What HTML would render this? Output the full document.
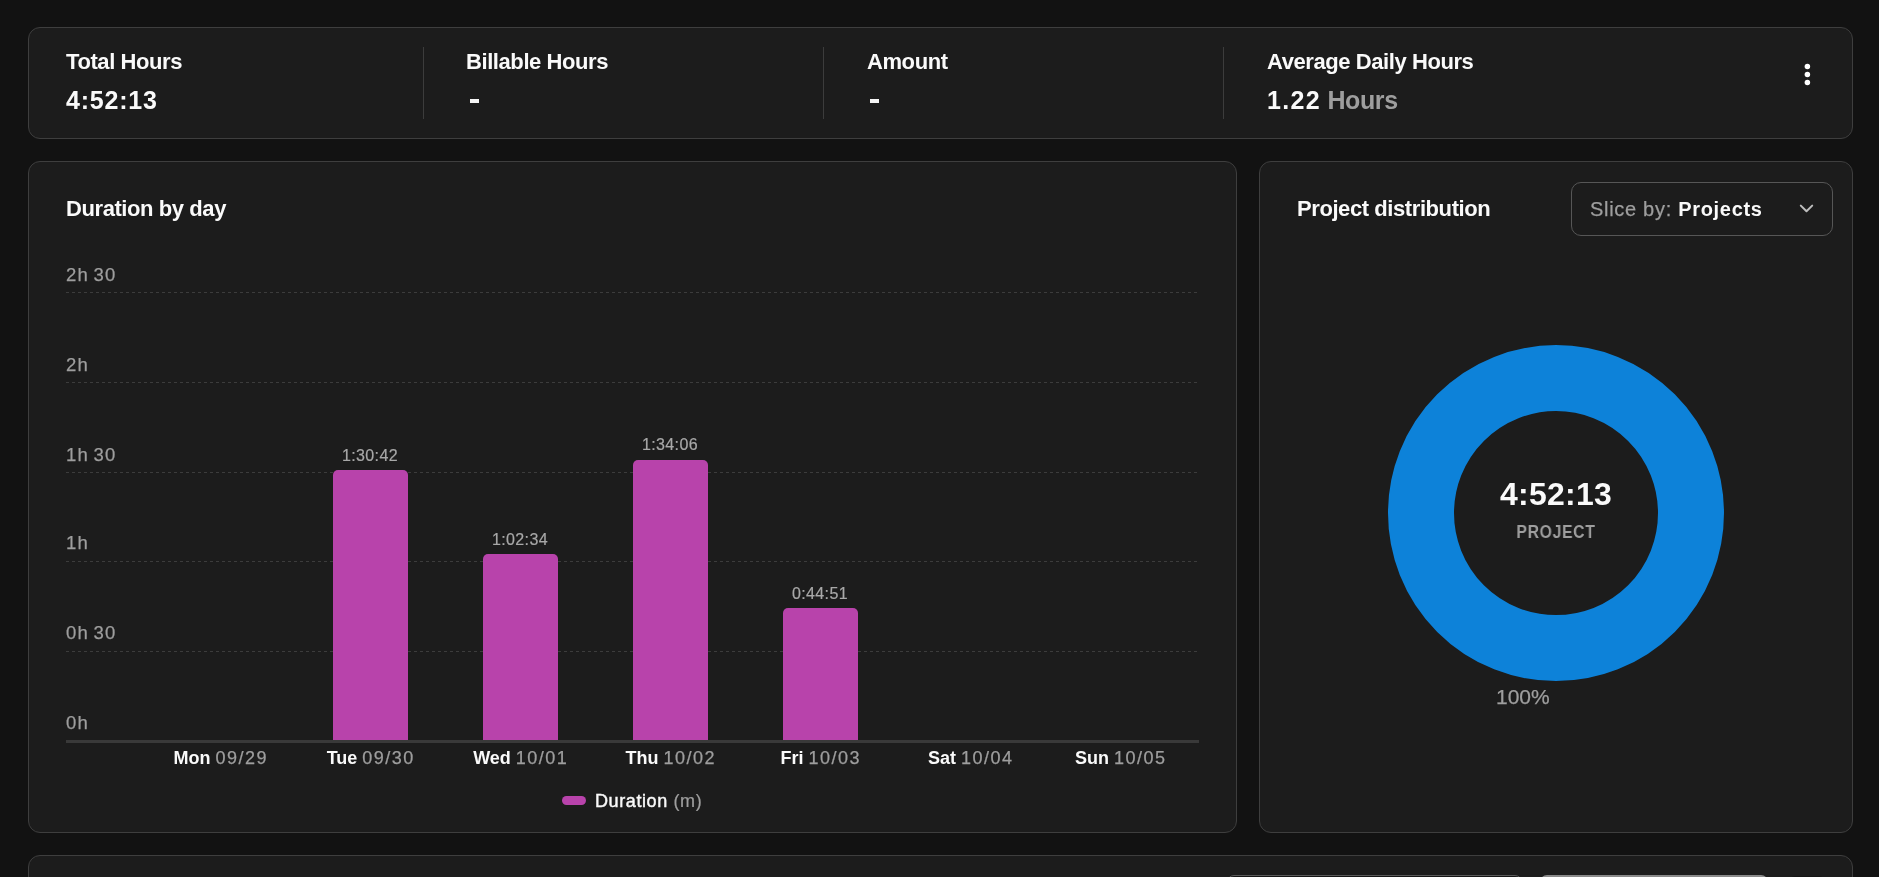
<!DOCTYPE html>
<html><head><meta charset="utf-8">
<style>
*{margin:0;padding:0;box-sizing:border-box}
html,body{width:1879px;height:877px;overflow:hidden;background:#121212;font-family:"Liberation Sans",sans-serif;color:#fafafa}
.card{position:absolute;background:#1c1c1c;border:1px solid #3e3e3e;border-radius:12px}
.t{position:absolute;white-space:nowrap;line-height:1;will-change:transform}
.b{font-weight:bold}
.g{color:#9e9e9e}
.sep{position:absolute;top:47px;width:1px;height:72px;background:#3c3c3c}
.grid{position:absolute;left:66px;width:1133px;height:1px;background-image:linear-gradient(to right,#3c3c3c 0,#3c3c3c 3px,transparent 3px,transparent 6px);background-size:6px 1px}
.bar{position:absolute;width:75px;background:#b843ab;border-radius:5px 5px 0 0}
.yl{font-size:18.5px;color:#9e9e9e;left:66px;letter-spacing:1.1px;word-spacing:-1.5px;-webkit-text-stroke:0.25px #9e9e9e}
.lab{font-size:22px;letter-spacing:-0.42px}
.vl{font-size:16px;color:#a8a8a8;text-align:center;width:100px;letter-spacing:0.35px;-webkit-text-stroke:0.2px #a8a8a8}
.xl{font-size:18px;text-align:center;width:150px;top:749px}
.xl .g{-webkit-text-stroke:0.25px #9e9e9e;letter-spacing:1.5px;margin-right:-1.5px}
</style></head><body>

<!-- top stats card -->
<div class="card" style="left:28px;top:27px;width:1825px;height:112px"></div>
<div class="sep" style="left:423px"></div>
<div class="sep" style="left:823px"></div>
<div class="sep" style="left:1223px"></div>
<div class="t b lab" style="left:66px;top:51px">Total Hours</div>
<div class="t b lab" style="left:466px;top:51px">Billable Hours</div>
<div class="t b lab" style="left:867px;top:51px">Amount</div>
<div class="t b lab" style="left:1267px;top:51px">Average Daily Hours</div>
<div class="t b" style="left:66px;top:88px;font-size:25px;letter-spacing:0.8px">4:52:13</div>
<div style="position:absolute;left:470px;top:99px;width:8.5px;height:4px;background:#f5f5f5"></div>
<div style="position:absolute;left:870px;top:99px;width:8.5px;height:4px;background:#f5f5f5"></div>
<div class="t b" style="left:1267px;top:88px;font-size:25px"><span style="letter-spacing:1.3px">1.22</span><span class="g" style="letter-spacing:-0.4px"> Hours</span></div>
<svg style="position:absolute;left:1800px;top:60px" width="16" height="30" viewBox="0 0 16 30"><circle cx="7.4" cy="6.4" r="2.75" fill="#fff"/><circle cx="7.4" cy="14.45" r="2.75" fill="#fff"/><circle cx="7.4" cy="22.5" r="2.75" fill="#fff"/></svg>

<!-- chart card -->
<div class="card" style="left:28px;top:161px;width:1209px;height:672px"></div>
<div class="t b lab" style="left:66px;top:198px">Duration by day</div>

<div class="t yl" style="top:266px">2h 30</div>
<div class="t yl" style="top:356px">2h</div>
<div class="t yl" style="top:446px">1h 30</div>
<div class="t yl" style="top:534px">1h</div>
<div class="t yl" style="top:624px">0h 30</div>
<div class="t yl" style="top:714px">0h</div>

<div class="grid" style="top:292px"></div>
<div class="grid" style="top:382px"></div>
<div class="grid" style="top:472px"></div>
<div class="grid" style="top:561px"></div>
<div class="grid" style="top:651px"></div>
<div style="position:absolute;left:66px;top:740px;width:1133px;height:3px;background:#393939"></div>

<div class="bar" style="left:333px;top:470px;height:270px"></div>
<div class="bar" style="left:483px;top:554px;height:186px"></div>
<div class="bar" style="left:633px;top:460px;height:280px"></div>
<div class="bar" style="left:783px;top:608px;height:132px"></div>

<div class="t vl" style="left:320px;top:448px">1:30:42</div>
<div class="t vl" style="left:470px;top:532px">1:02:34</div>
<div class="t vl" style="left:620px;top:437px">1:34:06</div>
<div class="t vl" style="left:770px;top:586px">0:44:51</div>

<div class="t xl" style="left:145px"><span class="b">Mon</span> <span class="g">09/29</span></div>
<div class="t xl" style="left:295px"><span class="b">Tue</span> <span class="g">09/30</span></div>
<div class="t xl" style="left:445px"><span class="b">Wed</span> <span class="g">10/01</span></div>
<div class="t xl" style="left:595px"><span class="b">Thu</span> <span class="g">10/02</span></div>
<div class="t xl" style="left:745px"><span class="b">Fri</span> <span class="g">10/03</span></div>
<div class="t xl" style="left:895px"><span class="b">Sat</span> <span class="g">10/04</span></div>
<div class="t xl" style="left:1045px"><span class="b">Sun</span> <span class="g">10/05</span></div>

<div style="position:absolute;left:562px;top:796px;width:24px;height:9px;border-radius:5px;background:#b843ab"></div>
<div class="t" style="left:595px;top:792px;font-size:18px;letter-spacing:0.6px"><span style="-webkit-text-stroke:0.45px #f5f5f5">Duration</span> <span class="g" style="-webkit-text-stroke:0.2px #9e9e9e">(m)</span></div>

<!-- donut card -->
<div class="card" style="left:1259px;top:161px;width:594px;height:672px"></div>
<div class="t b lab" style="left:1297px;top:198px">Project distribution</div>
<div style="position:absolute;left:1571px;top:182px;width:262px;height:54px;border:1px solid #565656;border-radius:10px"></div>
<div class="t" style="left:1590px;top:199px;font-size:20px;letter-spacing:0.7px"><span class="g" style="-webkit-text-stroke:0.25px #9e9e9e">Slice by:</span> <span class="b">Projects</span></div>
<svg style="position:absolute;left:1798px;top:202px" width="17" height="12" viewBox="0 0 17 12"><path d="M2.8 3.6 L8.5 9.3 L14.2 3.6" fill="none" stroke="#bdbdbd" stroke-width="2" stroke-linecap="round" stroke-linejoin="round"/></svg>

<svg style="position:absolute;left:1380px;top:337px" width="352" height="352" viewBox="0 0 352 352">
<circle cx="176" cy="176.1" r="135" fill="none" stroke="#0d82d9" stroke-width="66"/>
</svg>
<div class="t b" style="left:1456px;top:479px;width:200px;text-align:center;font-size:31px;letter-spacing:0.3px;transform:scaleX(1.03)">4:52:13</div>
<div class="t g b" style="left:1456px;top:524px;width:200px;text-align:center;font-size:17.5px;letter-spacing:0.75px;transform:scaleX(0.9)">PROJECT</div>
<div class="t g" style="left:1496px;top:686px;font-size:21px;-webkit-text-stroke:0.25px #9e9e9e">100%</div>

<!-- bottom card -->
<div class="card" style="left:28px;top:855px;width:1825px;height:200px"></div>
<div style="position:absolute;left:1227px;top:875px;width:295px;height:60px;border:1px solid #5a5a5a;border-radius:7px;background:#161616"></div>
<div style="position:absolute;left:1540px;top:875px;width:228px;height:60px;border-radius:7px;background:#8a8a8a"></div>
<div style="position:absolute;left:1788px;top:876px;width:38px;height:60px;border-radius:8px;background:#151515"></div>

</body></html>
